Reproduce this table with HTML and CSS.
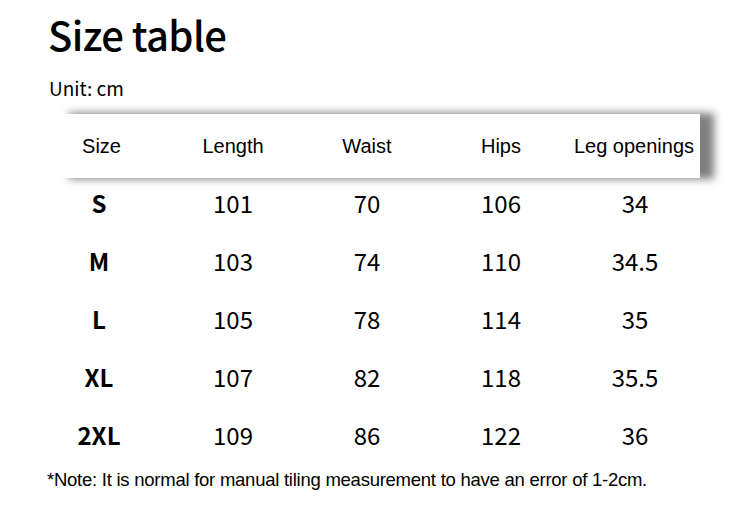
FILE: index.html
```html
<!DOCTYPE html>
<html>
<head>
<meta charset="utf-8">
<link rel="stylesheet" href="styles.css">
</head>
<body>
<div class="page">
  <h1 class="title">Size table</h1>
  <p class="unit">Unit: cm</p>
  <div class="table">
    <div class="head">
      <div class="hcell first">Size</div>
      <div class="hcell">Length</div>
      <div class="hcell">Waist</div>
      <div class="hcell">Hips</div>
      <div class="hcell">Leg openings</div>
    </div>
    <div class="row"><div class="cell size">S</div><div class="cell">101</div><div class="cell">70</div><div class="cell">106</div><div class="cell">34</div></div>
    <div class="row"><div class="cell size">M</div><div class="cell">103</div><div class="cell">74</div><div class="cell">110</div><div class="cell">34.5</div></div>
    <div class="row"><div class="cell size">L</div><div class="cell">105</div><div class="cell">78</div><div class="cell">114</div><div class="cell">35</div></div>
    <div class="row"><div class="cell size">XL</div><div class="cell">107</div><div class="cell">82</div><div class="cell">118</div><div class="cell">35.5</div></div>
    <div class="row"><div class="cell size">2XL</div><div class="cell">109</div><div class="cell">86</div><div class="cell">122</div><div class="cell">36</div></div>
  </div>
  <p class="note">*Note: It is normal for manual tiling measurement to have an error of 1-2cm.</p>
</div>
</body>
</html>
```
FILE: styles.css
```css
html, body {
  margin: 0;
  padding: 0;
  background: #fff;
}
.page {
  width: 750px;
  height: 511px;
  overflow: hidden;
  color: #000;
}
.title {
  margin: 0;
  padding: 10px 0 0 48px;
  font-family: "Noto Sans CJK SC", "Noto Sans", sans-serif;
  font-size: 40px;
  font-weight: 500;
  line-height: 48px;
  letter-spacing: -0.6px;
}
.unit {
  margin: 0;
  padding: 18px 0 0 49px;
  font-family: "Noto Sans CJK SC", "Noto Sans", sans-serif;
  font-size: 19px;
  line-height: 24px;
}
.table {
  margin: 14px 0 0 32px;
  width: 670px;
}
.head {
  margin-left: 25px;
  width: 643px;
  height: 64px;
  display: grid;
  grid-template-columns: 109px 134px 134px 134px 132px;
  align-items: center;
  background: #fff;
  box-shadow: 13px 0 8px 1px rgba(0, 0, 0, 0.5);
  margin-bottom: -4px;
  position: relative;
}
.hcell {
  text-align: center;
  font-family: "Liberation Sans", Arial, sans-serif;
  font-size: 20px;
  white-space: nowrap;
}
.hcell.first {
  padding-right: 20px;
}
.row {
  display: grid;
  grid-template-columns: repeat(5, 134px);
  height: 58px;
  align-items: center;
}
.cell {
  text-align: center;
  font-family: "Noto Sans CJK SC", "Noto Sans", sans-serif;
  font-size: 24px;
  line-height: 30px;
}
.cell.size {
  font-weight: 700;
}
.note {
  margin: 5px 0 0 47px;
  font-family: "Liberation Sans", Arial, sans-serif;
  font-size: 18.5px;
  line-height: 22px;
  letter-spacing: -0.25px;
}
```
